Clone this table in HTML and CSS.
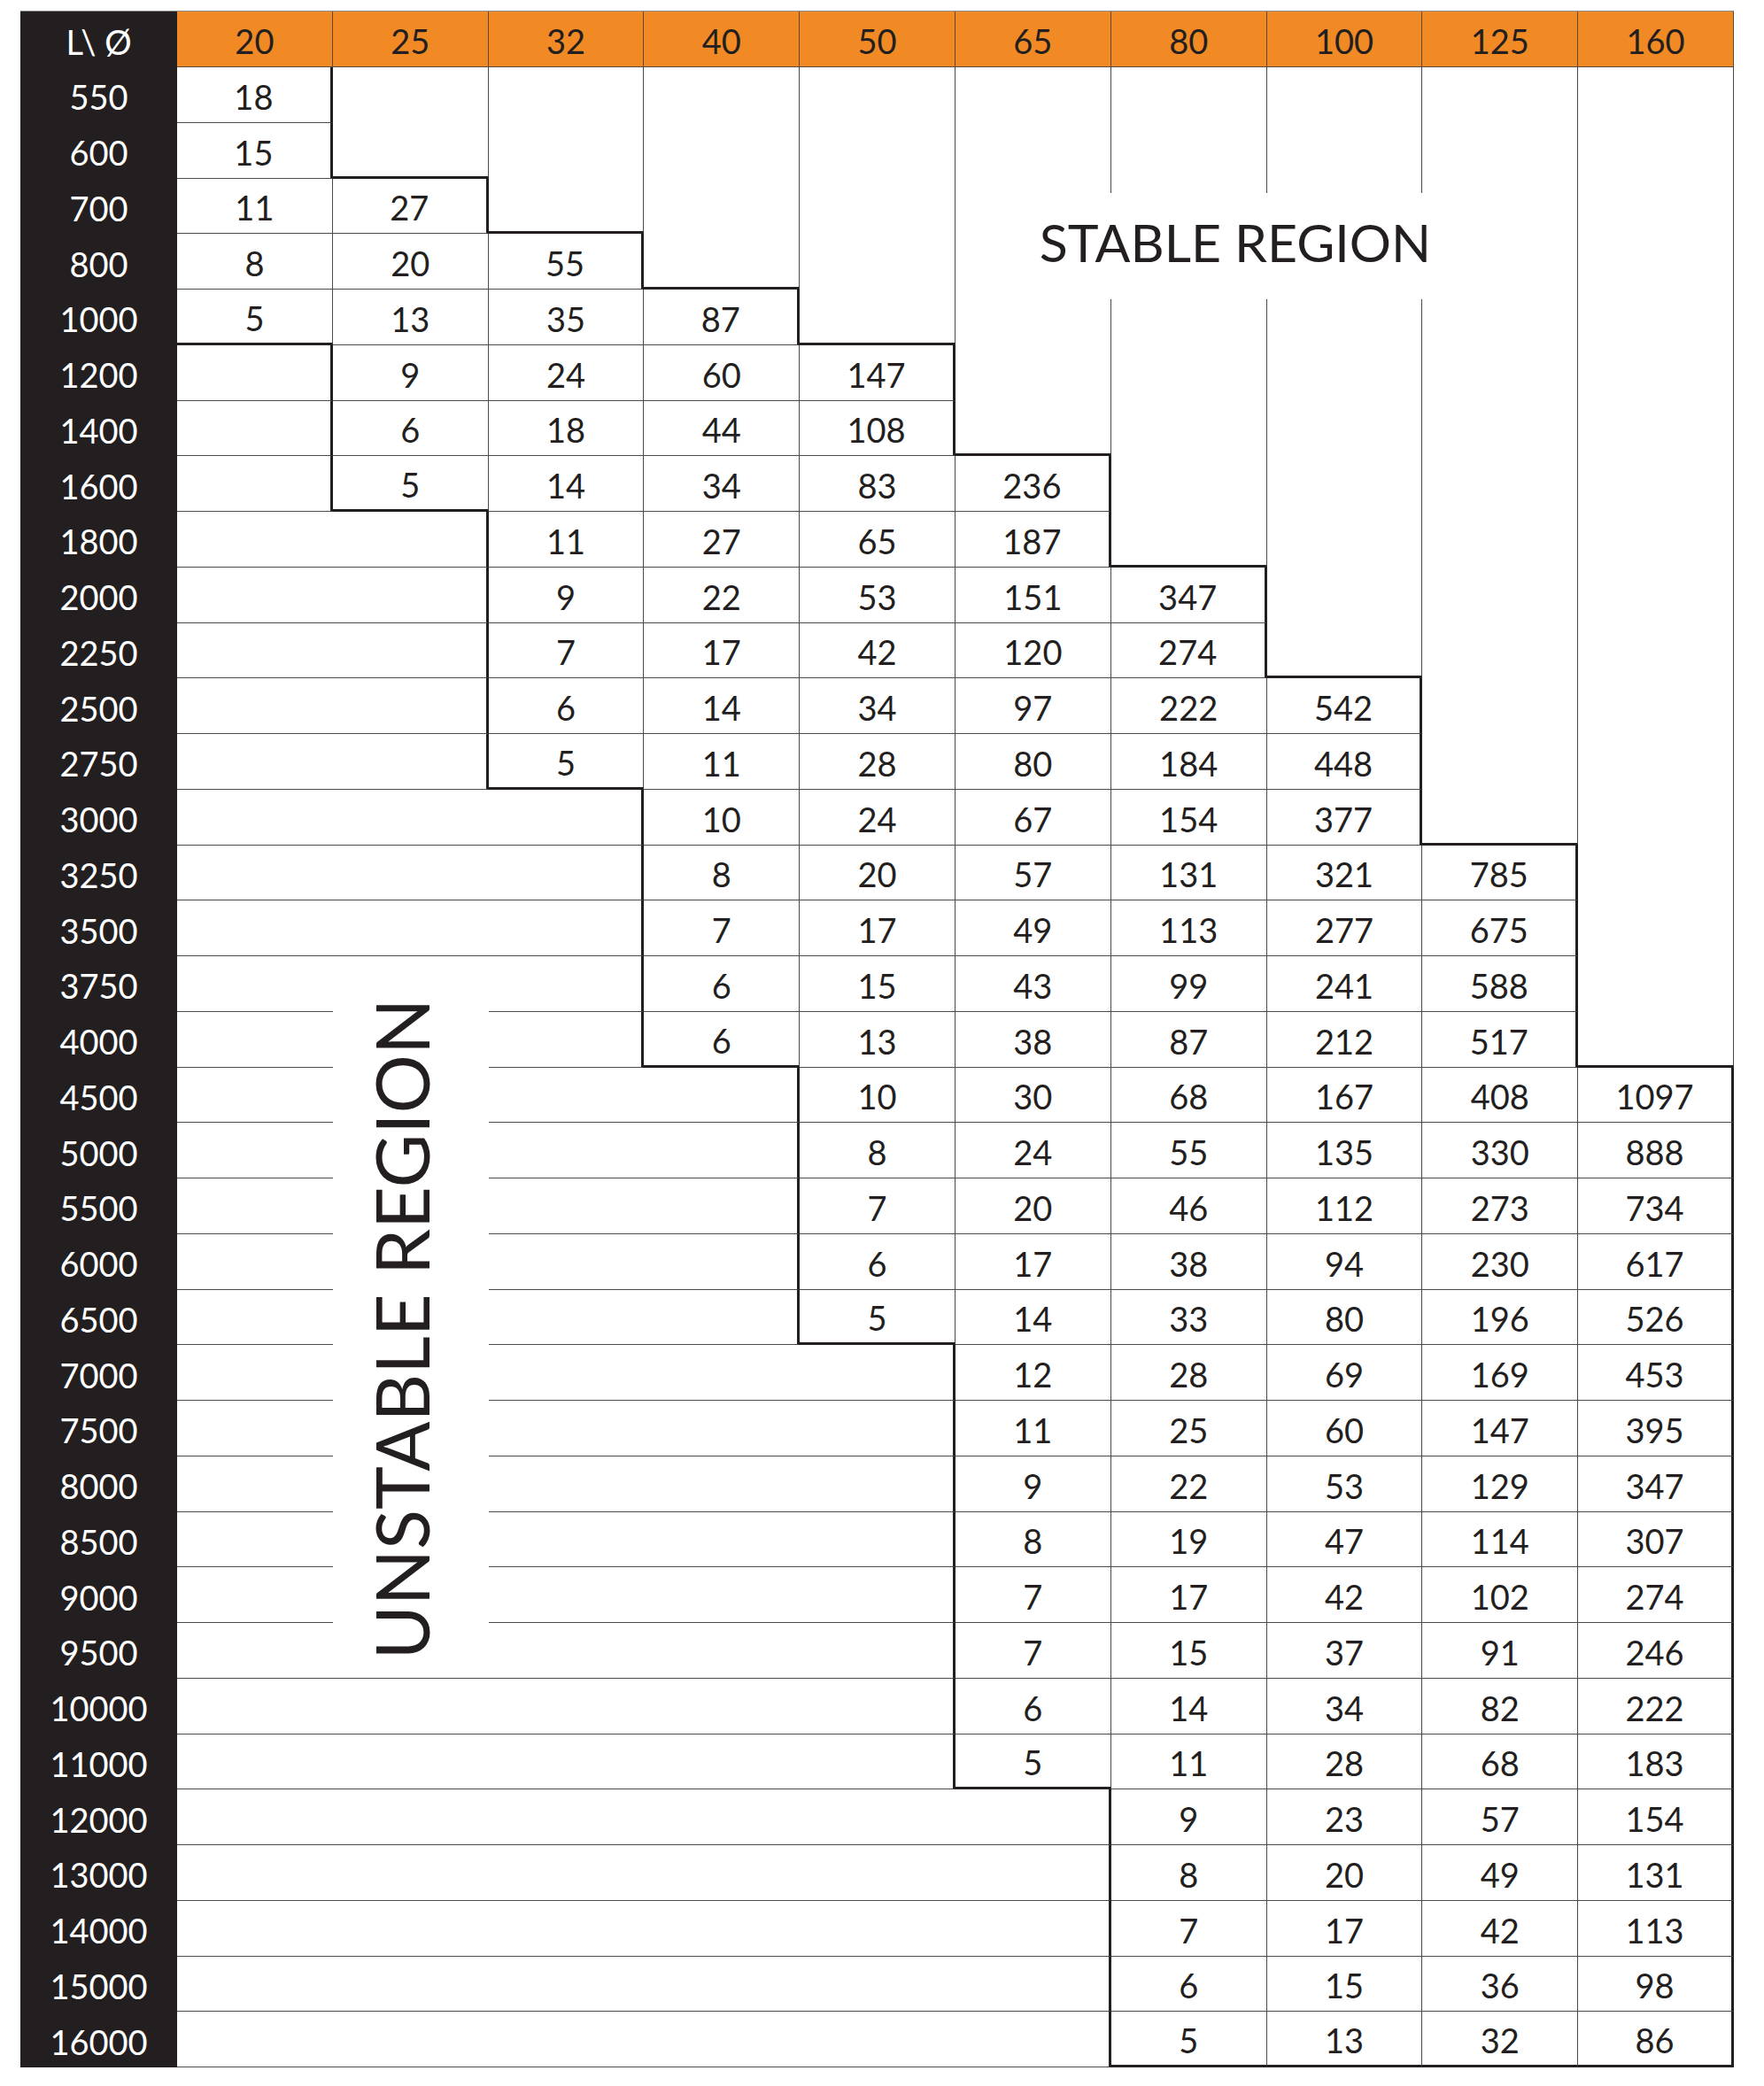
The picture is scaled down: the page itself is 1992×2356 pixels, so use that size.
FILE: index.html
```html
<!DOCTYPE html>
<html lang="en">
<head>
<meta charset="utf-8">
<title>L / Ø stability table</title>
<link rel="stylesheet" href="styles.css">
</head>
<body>
<div class="sheet">
  <div class="hl">L\ Ø</div><div class="h">20</div><div class="h">25</div><div class="h">32</div><div class="h">40</div><div class="h">50</div><div class="h">65</div><div class="h">80</div><div class="h">100</div><div class="h">125</div><div class="h">160</div>

  <div class="l">550</div><div class="d tr">18</div><div class="s"></div><div class="s"></div><div class="s"></div><div class="s"></div><div class="s"></div><div class="s"></div><div class="s"></div><div class="s"></div><div class="s"></div>
  <div class="l">600</div><div class="d tr">15</div><div class="s tb"></div><div class="s"></div><div class="s"></div><div class="s"></div><div class="s"></div><div class="s"></div><div class="s"></div><div class="s"></div><div class="s"></div>
  <div class="l">700</div><div class="d">11</div><div class="d tr">27</div><div class="s tb"></div><div class="s"></div><div class="s"></div><div class="s"></div><div class="s"></div><div class="s"></div><div class="s"></div><div class="s"></div>
  <div class="l">800</div><div class="d">8</div><div class="d">20</div><div class="d tr">55</div><div class="s tb"></div><div class="s"></div><div class="s"></div><div class="s"></div><div class="s"></div><div class="s"></div><div class="s"></div>
  <div class="l">1000</div><div class="d tb">5</div><div class="d">13</div><div class="d">35</div><div class="d tr">87</div><div class="s tb"></div><div class="s"></div><div class="s"></div><div class="s"></div><div class="s"></div><div class="s"></div>
  <div class="l">1200</div><div class="u tr"></div><div class="d">9</div><div class="d">24</div><div class="d">60</div><div class="d tr">147</div><div class="s"></div><div class="s"></div><div class="s"></div><div class="s"></div><div class="s"></div>
  <div class="l">1400</div><div class="u tr"></div><div class="d">6</div><div class="d">18</div><div class="d">44</div><div class="d tr">108</div><div class="s tb"></div><div class="s"></div><div class="s"></div><div class="s"></div><div class="s"></div>
  <div class="l">1600</div><div class="u tr"></div><div class="d tb">5</div><div class="d">14</div><div class="d">34</div><div class="d">83</div><div class="d tr">236</div><div class="s"></div><div class="s"></div><div class="s"></div><div class="s"></div>
  <div class="l">1800</div><div class="u"></div><div class="u tr"></div><div class="d">11</div><div class="d">27</div><div class="d">65</div><div class="d tr">187</div><div class="s tb"></div><div class="s"></div><div class="s"></div><div class="s"></div>
  <div class="l">2000</div><div class="u"></div><div class="u tr"></div><div class="d">9</div><div class="d">22</div><div class="d">53</div><div class="d">151</div><div class="d tr">347</div><div class="s"></div><div class="s"></div><div class="s"></div>
  <div class="l">2250</div><div class="u"></div><div class="u tr"></div><div class="d">7</div><div class="d">17</div><div class="d">42</div><div class="d">120</div><div class="d tr">274</div><div class="s tb"></div><div class="s"></div><div class="s"></div>
  <div class="l">2500</div><div class="u"></div><div class="u tr"></div><div class="d">6</div><div class="d">14</div><div class="d">34</div><div class="d">97</div><div class="d">222</div><div class="d tr">542</div><div class="s"></div><div class="s"></div>
  <div class="l">2750</div><div class="u"></div><div class="u tr"></div><div class="d tb">5</div><div class="d">11</div><div class="d">28</div><div class="d">80</div><div class="d">184</div><div class="d tr">448</div><div class="s"></div><div class="s"></div>
  <div class="l">3000</div><div class="u"></div><div class="u"></div><div class="u tr"></div><div class="d">10</div><div class="d">24</div><div class="d">67</div><div class="d">154</div><div class="d tr">377</div><div class="s tb"></div><div class="s"></div>
  <div class="l">3250</div><div class="u"></div><div class="u"></div><div class="u tr"></div><div class="d">8</div><div class="d">20</div><div class="d">57</div><div class="d">131</div><div class="d">321</div><div class="d tr">785</div><div class="s"></div>
  <div class="l">3500</div><div class="u"></div><div class="u"></div><div class="u tr"></div><div class="d">7</div><div class="d">17</div><div class="d">49</div><div class="d">113</div><div class="d">277</div><div class="d tr">675</div><div class="s"></div>
  <div class="l">3750</div><div class="u"></div><div class="u nb"></div><div class="u tr"></div><div class="d">6</div><div class="d">15</div><div class="d">43</div><div class="d">99</div><div class="d">241</div><div class="d tr">588</div><div class="s"></div>
  <div class="l">4000</div><div class="u"></div><div class="u nb"></div><div class="u tr"></div><div class="d tb">6</div><div class="d">13</div><div class="d">38</div><div class="d">87</div><div class="d">212</div><div class="d tr">517</div><div class="s tb"></div>
  <div class="l">4500</div><div class="u"></div><div class="u nb"></div><div class="u"></div><div class="u tr"></div><div class="d">10</div><div class="d">30</div><div class="d">68</div><div class="d">167</div><div class="d">408</div><div class="d tr">1097</div>
  <div class="l">5000</div><div class="u"></div><div class="u nb"></div><div class="u"></div><div class="u tr"></div><div class="d">8</div><div class="d">24</div><div class="d">55</div><div class="d">135</div><div class="d">330</div><div class="d tr">888</div>
  <div class="l">5500</div><div class="u"></div><div class="u nb"></div><div class="u"></div><div class="u tr"></div><div class="d">7</div><div class="d">20</div><div class="d">46</div><div class="d">112</div><div class="d">273</div><div class="d tr">734</div>
  <div class="l">6000</div><div class="u"></div><div class="u nb"></div><div class="u"></div><div class="u tr"></div><div class="d">6</div><div class="d">17</div><div class="d">38</div><div class="d">94</div><div class="d">230</div><div class="d tr">617</div>
  <div class="l">6500</div><div class="u"></div><div class="u nb"></div><div class="u"></div><div class="u tr"></div><div class="d tb">5</div><div class="d">14</div><div class="d">33</div><div class="d">80</div><div class="d">196</div><div class="d tr">526</div>
  <div class="l">7000</div><div class="u"></div><div class="u nb"></div><div class="u"></div><div class="u"></div><div class="u tr"></div><div class="d">12</div><div class="d">28</div><div class="d">69</div><div class="d">169</div><div class="d tr">453</div>
  <div class="l">7500</div><div class="u"></div><div class="u nb"></div><div class="u"></div><div class="u"></div><div class="u tr"></div><div class="d">11</div><div class="d">25</div><div class="d">60</div><div class="d">147</div><div class="d tr">395</div>
  <div class="l">8000</div><div class="u"></div><div class="u nb"></div><div class="u"></div><div class="u"></div><div class="u tr"></div><div class="d">9</div><div class="d">22</div><div class="d">53</div><div class="d">129</div><div class="d tr">347</div>
  <div class="l">8500</div><div class="u"></div><div class="u nb"></div><div class="u"></div><div class="u"></div><div class="u tr"></div><div class="d">8</div><div class="d">19</div><div class="d">47</div><div class="d">114</div><div class="d tr">307</div>
  <div class="l">9000</div><div class="u"></div><div class="u nb"></div><div class="u"></div><div class="u"></div><div class="u tr"></div><div class="d">7</div><div class="d">17</div><div class="d">42</div><div class="d">102</div><div class="d tr">274</div>
  <div class="l">9500</div><div class="u"></div><div class="u"></div><div class="u"></div><div class="u"></div><div class="u tr"></div><div class="d">7</div><div class="d">15</div><div class="d">37</div><div class="d">91</div><div class="d tr">246</div>
  <div class="l">10000</div><div class="u"></div><div class="u"></div><div class="u"></div><div class="u"></div><div class="u tr"></div><div class="d">6</div><div class="d">14</div><div class="d">34</div><div class="d">82</div><div class="d tr">222</div>
  <div class="l">11000</div><div class="u"></div><div class="u"></div><div class="u"></div><div class="u"></div><div class="u tr"></div><div class="d tb">5</div><div class="d">11</div><div class="d">28</div><div class="d">68</div><div class="d tr">183</div>
  <div class="l">12000</div><div class="u"></div><div class="u"></div><div class="u"></div><div class="u"></div><div class="u"></div><div class="u tr"></div><div class="d">9</div><div class="d">23</div><div class="d">57</div><div class="d tr">154</div>
  <div class="l">13000</div><div class="u"></div><div class="u"></div><div class="u"></div><div class="u"></div><div class="u"></div><div class="u tr"></div><div class="d">8</div><div class="d">20</div><div class="d">49</div><div class="d tr">131</div>
  <div class="l">14000</div><div class="u"></div><div class="u"></div><div class="u"></div><div class="u"></div><div class="u"></div><div class="u tr"></div><div class="d">7</div><div class="d">17</div><div class="d">42</div><div class="d tr">113</div>
  <div class="l">15000</div><div class="u"></div><div class="u"></div><div class="u"></div><div class="u"></div><div class="u"></div><div class="u tr"></div><div class="d">6</div><div class="d">15</div><div class="d">36</div><div class="d tr">98</div>
  <div class="l">16000</div><div class="u"></div><div class="u"></div><div class="u"></div><div class="u"></div><div class="u"></div><div class="u tr"></div><div class="d tb">5</div><div class="d tb">13</div><div class="d tb">32</div><div class="d tb tr">86</div>

  <span class="stable-label">STABLE REGION</span>
  <span class="unstable-label">UNSTABLE REGION</span>
</div>
</body>
</html>
```

FILE: styles.css
```css
html, body {
  margin: 0;
  padding: 0;
  background: #ffffff;
}

body {
  font-family: Lato, "Open Sans", "Liberation Sans", sans-serif;
  color: #231f20;
}

.sheet {
  position: relative;
  margin: 12px 0 0 23px;
  width: 1935px;
  display: grid;
  grid-template-columns: 177px repeat(10, 175.8px);
  grid-template-rows: 63px repeat(36, 62.75px);
  border-top: 1.5px solid #8a8a8a;
}

.sheet > div {
  box-sizing: border-box;
  display: flex;
  align-items: center;
  justify-content: center;
  padding-top: 4px;
  font-size: 38px;
  line-height: 1;
}

.hl,
.l {
  background: #231f20;
  color: #ffffff;
}

.h {
  background: #f18a24;
  color: #231f20;
  border-right: 1.5px solid #5a4a3a;
  border-bottom: 1.5px solid #5a4a3a;
}

.d {
  border-right: 1.5px solid #4a4a4a;
  border-bottom: 1.5px solid #4a4a4a;
}

.s {
  border-right: 1.5px solid #4a4a4a;
}

.u {
  border-bottom: 1.5px solid #4a4a4a;
}

.tr {
  border-right: 3px solid #231f20;
}

.tb {
  border-bottom: 3px solid #231f20;
}

.nb {
  border-bottom: none;
}

.stable-label {
  position: absolute;
  left: 1137px;
  top: 205px;
  width: 470px;
  height: 120px;
  box-sizing: border-box;
  padding-bottom: 10px;
  background: #ffffff;
  display: flex;
  align-items: center;
  justify-content: center;
  font-size: 59px;
  line-height: 1;
  white-space: nowrap;
}

.unstable-label {
  position: absolute;
  left: 430px;
  top: 1488px;
  transform: translate(-50%, -50%) rotate(-90deg);
  font-size: 83px;
  line-height: 1;
  white-space: nowrap;
}
```
